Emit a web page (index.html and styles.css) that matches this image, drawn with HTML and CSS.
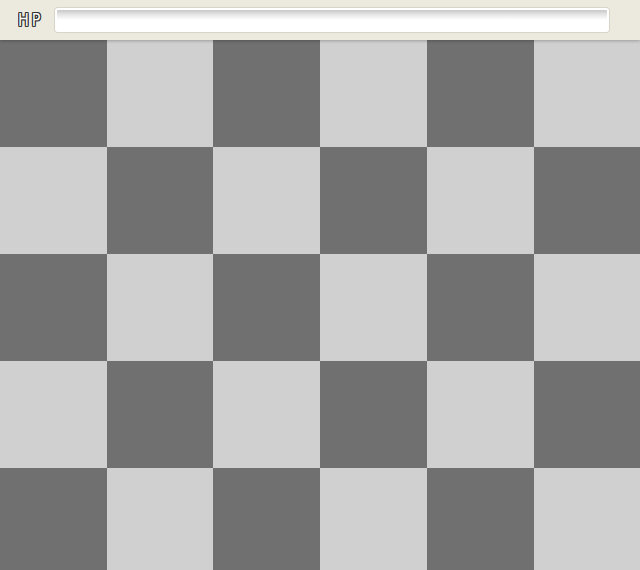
FILE: index.html
```html
<!DOCTYPE html>
<html>
<head>
<meta charset="utf-8">
<link rel="stylesheet" href="styles.css">
</head>
<body>
<div class="topbar">
  <span class="hp">HP</span>
  <div class="hpbar"></div>
</div>
<div class="board">
  <div class="d"></div><div class="l"></div><div class="d"></div><div class="l"></div><div class="d"></div><div class="l"></div>
  <div class="l"></div><div class="d"></div><div class="l"></div><div class="d"></div><div class="l"></div><div class="d"></div>
  <div class="d"></div><div class="l"></div><div class="d"></div><div class="l"></div><div class="d"></div><div class="l"></div>
  <div class="l"></div><div class="d"></div><div class="l"></div><div class="d"></div><div class="l"></div><div class="d"></div>
  <div class="d"></div><div class="l"></div><div class="d"></div><div class="l"></div><div class="d"></div><div class="l"></div>
</div>
</body>
</html>
```
FILE: styles.css
```css
html, body {
  margin: 0;
  padding: 0;
  width: 640px;
  height: 570px;
  overflow: hidden;
  background: #d0d0d0;
}
.topbar {
  position: relative;
  z-index: 2;
  height: 40px;
  box-sizing: border-box;
  background: #ece9de;
  display: flex;
  align-items: center;
  padding-left: 18px;
  padding-right: 31px;
  box-shadow: 0 1px 3px rgba(0,0,0,0.25);
}
.hp {
  font-family: "DejaVu Sans Condensed", "DejaVu Sans", sans-serif;
  font-size: 16px;
  line-height: 20px;
  color: #ffffff;
  letter-spacing: 3px;
  width: 37px;
  display: inline-block;
  transform: scaleY(1.15);
  transform-origin: left center;
  text-shadow: 1px 0 0 #333, -1px 0 0 #333, 0 1px 0 #333, 0 -1px 0 #333,
    1px 1px 0 #333, -1px -1px 0 #333, 1px -1px 0 #333, -1px 1px 0 #333;
}
.hpbar {
  flex: 1;
  height: 24px;
  box-sizing: border-box;
  border-radius: 3px;
  border: 2px solid #ffffff;
  background: linear-gradient(to bottom, #c8c8c8 0px, #e8e8e8 5px, #ffffff 10px, #ffffff 100%);
  box-shadow: 0 0 0 1px #d6d3c8;
}
.board {
  display: grid;
  grid-template-columns: 107px 106px 107px 107px 107px 106px;
  grid-template-rows: repeat(5, 107px);
}
.d { background: #707070; }
.l { background: #d0d0d0; }
```
